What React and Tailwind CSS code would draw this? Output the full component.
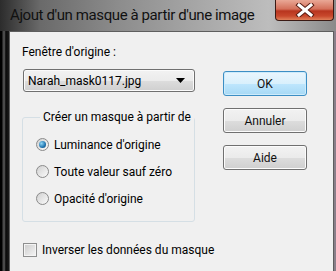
import React from 'react';

function Radio({ checked, children }) {
    return (
        <div className="flex items-center h-[27px]">
            <span className="relative w-[13px] h-[13px] rounded-full border border-[#8a8a8a] bg-[linear-gradient(135deg,#d0d0d0,#fbfbfb)] flex items-center justify-center">
                {checked && (
                    <span className="w-[7px] h-[7px] rounded-full bg-[radial-gradient(circle_at_35%_35%,#8fd6f5,#1f74b0_60%,#0d3f66)]" />
                )}
            </span>
            <span className="ml-[5px] whitespace-nowrap">{children}</span>
        </div>
    );
}

function Button({ children, primary }) {
    return (
        <div
            className={
                'w-[84px] h-[25px] rounded-[3px] border flex items-center justify-center text-[#111] ' +
                (primary
                    ? 'border-[#3c8ec4] bg-[linear-gradient(#eaf6fd_0%,#d9f0fc_50%,#bee6fd_51%,#a7d9f5_100%)] shadow-[inset_0_0_0_1px_#cdebfb]'
                    : 'border-[#707070] bg-[linear-gradient(#f2f2f2_0%,#ebebeb_50%,#dddddd_51%,#cfcfcf_100%)] shadow-[inset_0_0_0_1px_#fcfcfc]')
            }
        >
            {children}
        </div>
    );
}

export default function App() {
    return (
        <div className="w-[336px] h-[271px] overflow-hidden flex flex-col bg-[linear-gradient(90deg,#2c2c2c_0%,#6a6a6a_12%,#8c8c8c_35%,#a8a8a8_60%,#bdbdbd_80%,#8a8a8a_100%)] font-['Roboto',sans-serif] text-[12px] text-black">
            <div className="h-[31px] flex items-start justify-between shrink-0">
                <div className="pl-[10px] pt-[4px] text-[15px] leading-[22px] text-[#111] tracking-[-0.4px] whitespace-nowrap">
                    Ajout d'un masque à partir d'une image
                </div>
                <div className="mr-[2px] w-[59px] h-[21px] shrink-0 rounded-b-[4px] border border-t-0 border-[#3a1a14] bg-[linear-gradient(#e9a896_0%,#d4705a_45%,#b8351f_55%,#c8482c_80%,#e0805a_100%)] flex items-center justify-center">
                    <svg width="20" height="14" viewBox="0 0 20 14">
                        <path d="M4 2 L16 12 M16 2 L4 12" stroke="#5a1e14" strokeWidth="5" strokeLinecap="square" />
                        <path d="M4 2 L16 12 M16 2 L4 12" stroke="#ffffff" strokeWidth="3" strokeLinecap="square" />
                    </svg>
                </div>
            </div>
            <div className="flex flex-1">
                <div className="w-[9px] shrink-0 bg-[linear-gradient(90deg,#000_0%,#000_20%,#4a4a4a_35%,#4a4a4a_50%,#0a0a0a_65%,#1a1a1a_100%)]" />
                <div className="flex-1 bg-[#f0f0f0] border border-b-0 border-[#5e5e5e] flex">
                    <div className="w-[200px] pl-[12px] pt-[12px]">
                        <div className="leading-[16px] whitespace-nowrap">Fenêtre d'origine :</div>
                        <div className="mt-[9px] ml-px w-[172px] h-[23px] rounded-[3px] border border-[#707070] bg-[linear-gradient(#f2f2f2_0%,#ebebeb_50%,#dddddd_51%,#cfcfcf_100%)] shadow-[inset_0_0_0_1px_#fbfbfb] flex items-center justify-between pl-[4px] pr-[9px]">
                            <span>Narah_mask0117.jpg</span>
                            <svg width="9" height="5" viewBox="0 0 9 5">
                                <path d="M0 0 H9 L4.5 5 Z" fill="#000" />
                            </svg>
                        </div>
                        <fieldset className="mt-[17px] w-[171px] h-[113px] border border-[#d5dfe5] rounded-[3px] pl-[13px] pt-[6px] m-0">
                            <legend className="ml-[4px] px-[3px] leading-[16px] whitespace-nowrap">Créer un masque à partir de</legend>
                            <Radio checked>Luminance d'origine</Radio>
                            <Radio>Toute valeur sauf zéro</Radio>
                            <Radio>Opacité d'origine</Radio>
                        </fieldset>
                        <div className="mt-[19px] ml-px flex items-center">
                            <span className="w-[14px] h-[14px] shrink-0 border border-[#8e8f8f] bg-[linear-gradient(135deg,#cbcbcb,#f6f6f6)] shadow-[inset_0_0_0_1px_#f4f4f4]" />
                            <span className="ml-[5px] whitespace-nowrap">Inverser les données du masque</span>
                        </div>
                    </div>
                    <div className="ml-[13px] pt-[39px] flex flex-col gap-[12px]">
                        <Button primary>OK</Button>
                        <Button>Annuler</Button>
                        <Button>Aide</Button>
                    </div>
                </div>
                <div className="w-[2px] shrink-0 bg-[#8a7f8a]" />
            </div>
        </div>
    );
}
